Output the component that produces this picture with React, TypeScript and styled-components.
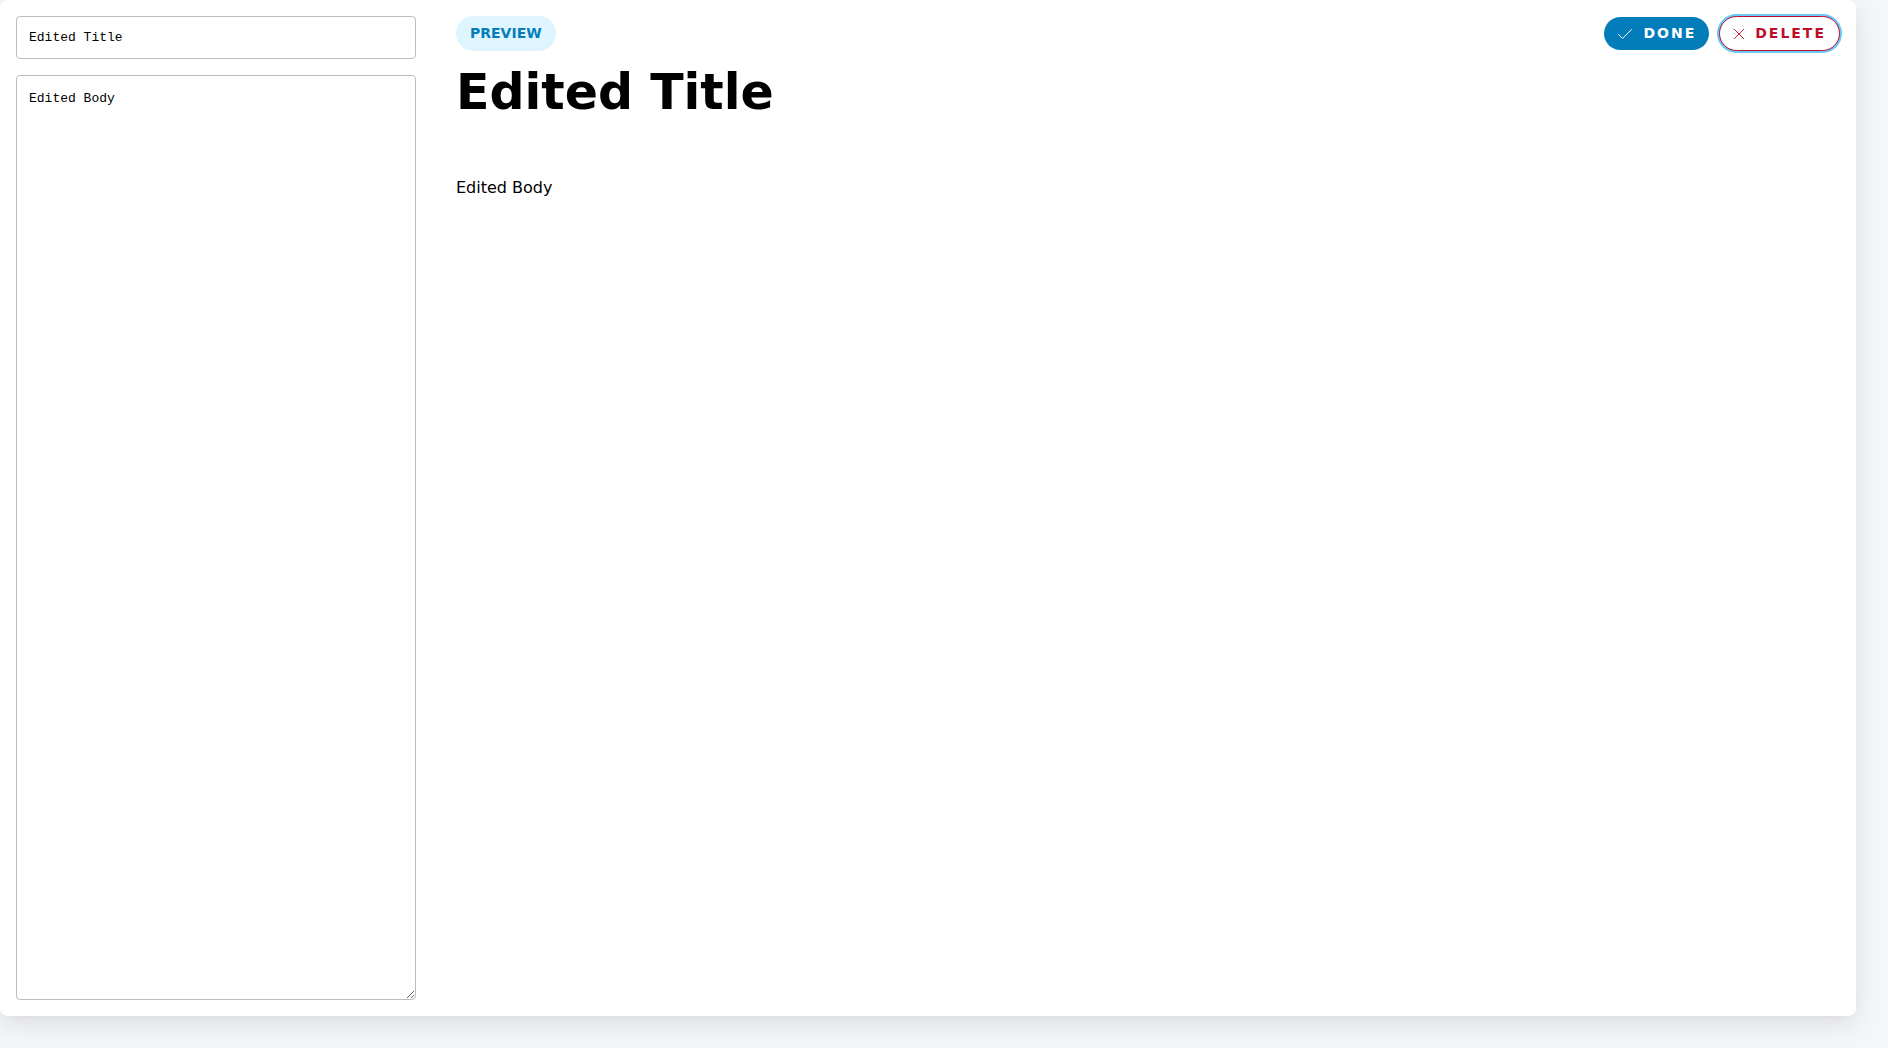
import React, { useState } from "react";
import styled, { createGlobalStyle, css } from "styled-components";

const GlobalStyle = createGlobalStyle`
  *, *::before, *::after { box-sizing: border-box; }
  body {
    margin: 0;
    background: #f5f6fa;
    color: #000;
    font-family: "DejaVu Sans", sans-serif;
    font-size: 16px;
    line-height: 20px;
  }
`;

const Page = styled.div`
  height: 100vh;
  padding: 0 32px 32px 0;
`;

const Editor = styled.main`
  display: flex;
  height: 100%;
  background: #fff;
  border-radius: 8px;
  box-shadow: 0 8px 24px rgba(0, 0, 0, 0.1), 0 2px 2px rgba(0, 0, 0, 0.02);
`;

const Form = styled.form`
  flex: 0 0 432px;
  display: flex;
  flex-direction: column;
  gap: 16px;
  padding: 16px;
`;

const field = css`
  width: 100%;
  padding: 12px;
  border: 1px solid #b9bcc1;
  border-radius: 4px;
  background: #fff;
  color: #000;
  font-family: "Liberation Mono", monospace;
  font-size: 13px;
`;

const TitleInput = styled.input`
  ${field}
  height: 43px;
`;

const BodyInput = styled.textarea`
  ${field}
  flex: 1;
  padding: 15px 12px;
  resize: vertical;
`;

const Preview = styled.section`
  flex: 1;
  min-width: 0;
  padding: 16px 16px 16px 24px;
`;

const Menu = styled.header`
  display: flex;
  align-items: center;
  justify-content: space-between;
`;

const Label = styled.span`
  padding: 7px 14px 8px;
  border-radius: 18px;
  background: #def5ff;
  color: #037dba;
  font-size: 14px;
  font-weight: 700;
`;

const Actions = styled.div`
  display: flex;
  align-items: center;
  gap: 10px;
`;

const ActionButton = styled.button<{ $variant: "done" | "delete" }>`
  display: flex;
  align-items: center;
  gap: 11px;
  padding: 8px 13px 8px 14px;
  border: 0;
  border-radius: 18px;
  font: 700 14px/17px "DejaVu Sans", sans-serif;
  letter-spacing: 2px;
  cursor: pointer;

  ${(p) =>
    p.$variant === "done"
      ? css`
          background: #037dba;
          color: #fff;
        `
      : css`
          border: 1px solid #bd0d2a;
          background: #fff;
          color: #bd0d2a;
          box-shadow: 0 0 0 2px rgba(4, 164, 244, 0.6);
        `}
`;

const Heading = styled.h1`
  margin: 10px 0 0;
  font-size: 49px;
  line-height: 64px;
`;

const Body = styled.div`
  padding-top: 53px;
`;

const CheckIcon = () => (
  <svg width="14" height="10" viewBox="0 0 14 10" fill="none" stroke="currentColor" strokeWidth="1" aria-hidden="true">
    <path d="M0.3 5.3 4.5 9.5 13.7 0.3" />
  </svg>
);

const CrossIcon = () => (
  <svg width="10" height="10" viewBox="0 0 10 10" fill="none" stroke="currentColor" strokeWidth="0.9" aria-hidden="true">
    <path d="M0 0 10 10M10 0 0 10" />
  </svg>
);

export default function App() {
  const [title, setTitle] = useState("Edited Title");
  const [body, setBody] = useState("Edited Body");
  return (
    <Page>
      <GlobalStyle />
      <Editor>
        <Form onSubmit={(e) => e.preventDefault()}>
          <TitleInput aria-label="Title" value={title} onChange={(e) => setTitle(e.target.value)} />
          <BodyInput aria-label="Body" value={body} onChange={(e) => setBody(e.target.value)} />
        </Form>
        <Preview>
          <Menu>
            <Label>PREVIEW</Label>
            <Actions>
              <ActionButton $variant="done" type="button">
                <CheckIcon />
                DONE
              </ActionButton>
              <ActionButton $variant="delete" type="button">
                <CrossIcon />
                DELETE
              </ActionButton>
            </Actions>
          </Menu>
          <Heading>{title}</Heading>
          <Body>{body}</Body>
        </Preview>
      </Editor>
    </Page>
  );
}
